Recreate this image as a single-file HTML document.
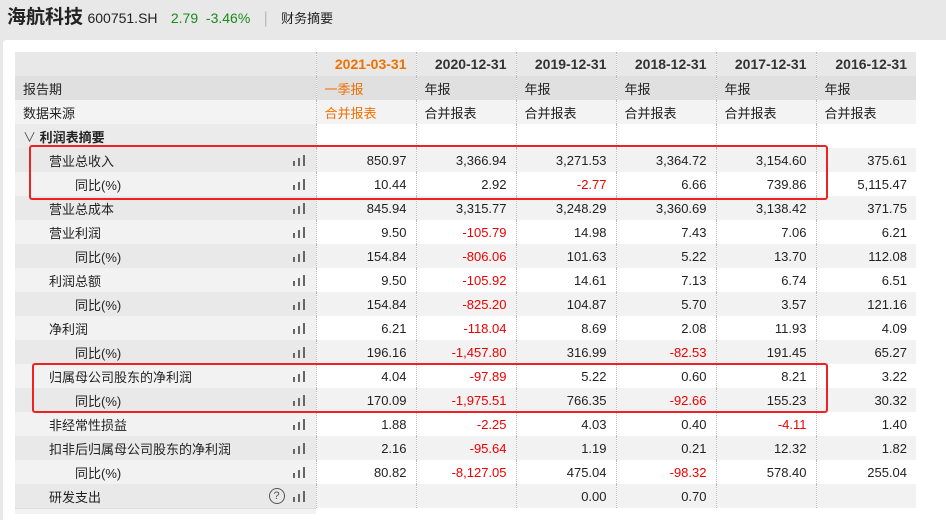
<!DOCTYPE html>
<html><head><meta charset="utf-8"><style>
body{margin:0;width:946px;height:520px;background:#e8e8e8;font-family:"Liberation Sans","Noto Sans CJK SC",sans-serif;position:relative;overflow:hidden;color:#222}
.top{position:absolute;left:7px;top:4px;height:28px;line-height:28px;white-space:nowrap}
.top b{font-size:19px;font-weight:bold;color:#222}
.panel{position:absolute;left:3px;top:40px;width:943px;height:480px;background:#fff;border-radius:3px 0 0 0}
table{position:absolute;left:15px;top:52px;width:901px;border-collapse:collapse;table-layout:fixed;font-size:13px}
td{height:24px;padding:0;white-space:nowrap;overflow:hidden;box-sizing:border-box}
td.l{position:relative}
td.d{padding-right:9px;text-align:right;border-left:1px dotted #bbb}
td.h{padding-left:8px;text-align:left;border-left:1px dotted #bbb}
tr.hd td.d{font-weight:bold;font-size:14px;color:#333}
.o{color:#f07000!important}
.r{color:#e00}
.ic{position:absolute;right:11px;top:7px;width:12px;height:11px}
.ic i{position:absolute;bottom:0;width:2px;background:#666}
.q{position:absolute;right:31px;top:4px;width:14px;height:14px;border:1px solid #555;border-radius:50%;font-size:11px;line-height:14px;text-align:center;color:#555}
.g td.l{background:#e9e9e9}.g td.d{background:#f2f2f2}
.w td.l{background:#f2f2f2}.w td.d{background:#fff}
.box{position:absolute;border:2px solid #ee2222;border-radius:3px}
</style></head><body>
<div class="top"><b>海航科技</b> <span style="font-size:14px">600751.SH</span>&nbsp;&nbsp;&nbsp;<span style="color:#1a8a1a;font-size:14px">2.79&nbsp;&nbsp;-3.46%</span>&nbsp;&nbsp;&nbsp;<span style="color:#bbb">|</span>&nbsp;&nbsp;&nbsp;<span style="font-size:13px">财务摘要</span></div>
<div class="panel"></div>
<table>
<colgroup><col style="width:301px"><col style="width:100px"><col style="width:100px"><col style="width:100px"><col style="width:100px"><col style="width:100px"><col style="width:100px"></colgroup>
<tr class="hd" style="background:#e8e8e8"><td class="l"></td><td class="d o">2021-03-31</td><td class="d">2020-12-31</td><td class="d">2019-12-31</td><td class="d">2018-12-31</td><td class="d">2017-12-31</td><td class="d">2016-12-31</td></tr>
<tr style="background:#e0e0e0"><td class="l" style="padding-left:8px">报告期</td><td class="h o">一季报</td><td class="h">年报</td><td class="h">年报</td><td class="h">年报</td><td class="h">年报</td><td class="h">年报</td></tr>
<tr style="background:#f3f3f3"><td class="l" style="padding-left:8px">数据来源</td><td class="h o">合并报表</td><td class="h">合并报表</td><td class="h">合并报表</td><td class="h">合并报表</td><td class="h">合并报表</td><td class="h">合并报表</td></tr>
<tr><td class="l" style="background:#ebebeb;padding-left:8px;font-weight:bold"><span style="font-weight:normal;color:#555">∨</span> 利润表摘要</td><td class="d"></td><td class="d"></td><td class="d"></td><td class="d"></td><td class="d"></td><td class="d"></td></tr>
<tr class="g"><td class="l" style="padding-left:34px">营业总收入<span class="ic"><i style="left:0;height:5px"></i><i style="left:5px;height:8px"></i><i style="left:10px;height:11px"></i></span></td><td class="d">850.97</td><td class="d">3,366.94</td><td class="d">3,271.53</td><td class="d">3,364.72</td><td class="d">3,154.60</td><td class="d">375.61</td></tr>
<tr class="w"><td class="l" style="padding-left:60px">同比(%)<span class="ic"><i style="left:0;height:5px"></i><i style="left:5px;height:8px"></i><i style="left:10px;height:11px"></i></span></td><td class="d">10.44</td><td class="d">2.92</td><td class="d r">-2.77</td><td class="d">6.66</td><td class="d">739.86</td><td class="d">5,115.47</td></tr>
<tr class="g"><td class="l" style="padding-left:34px">营业总成本<span class="ic"><i style="left:0;height:5px"></i><i style="left:5px;height:8px"></i><i style="left:10px;height:11px"></i></span></td><td class="d">845.94</td><td class="d">3,315.77</td><td class="d">3,248.29</td><td class="d">3,360.69</td><td class="d">3,138.42</td><td class="d">371.75</td></tr>
<tr class="w"><td class="l" style="padding-left:34px">营业利润<span class="ic"><i style="left:0;height:5px"></i><i style="left:5px;height:8px"></i><i style="left:10px;height:11px"></i></span></td><td class="d">9.50</td><td class="d r">-105.79</td><td class="d">14.98</td><td class="d">7.43</td><td class="d">7.06</td><td class="d">6.21</td></tr>
<tr class="g"><td class="l" style="padding-left:60px">同比(%)<span class="ic"><i style="left:0;height:5px"></i><i style="left:5px;height:8px"></i><i style="left:10px;height:11px"></i></span></td><td class="d">154.84</td><td class="d r">-806.06</td><td class="d">101.63</td><td class="d">5.22</td><td class="d">13.70</td><td class="d">112.08</td></tr>
<tr class="w"><td class="l" style="padding-left:34px">利润总额<span class="ic"><i style="left:0;height:5px"></i><i style="left:5px;height:8px"></i><i style="left:10px;height:11px"></i></span></td><td class="d">9.50</td><td class="d r">-105.92</td><td class="d">14.61</td><td class="d">7.13</td><td class="d">6.74</td><td class="d">6.51</td></tr>
<tr class="g"><td class="l" style="padding-left:60px">同比(%)<span class="ic"><i style="left:0;height:5px"></i><i style="left:5px;height:8px"></i><i style="left:10px;height:11px"></i></span></td><td class="d">154.84</td><td class="d r">-825.20</td><td class="d">104.87</td><td class="d">5.70</td><td class="d">3.57</td><td class="d">121.16</td></tr>
<tr class="w"><td class="l" style="padding-left:34px">净利润<span class="ic"><i style="left:0;height:5px"></i><i style="left:5px;height:8px"></i><i style="left:10px;height:11px"></i></span></td><td class="d">6.21</td><td class="d r">-118.04</td><td class="d">8.69</td><td class="d">2.08</td><td class="d">11.93</td><td class="d">4.09</td></tr>
<tr class="g"><td class="l" style="padding-left:60px">同比(%)<span class="ic"><i style="left:0;height:5px"></i><i style="left:5px;height:8px"></i><i style="left:10px;height:11px"></i></span></td><td class="d">196.16</td><td class="d r">-1,457.80</td><td class="d">316.99</td><td class="d r">-82.53</td><td class="d">191.45</td><td class="d">65.27</td></tr>
<tr class="w"><td class="l" style="padding-left:34px">归属母公司股东的净利润<span class="ic"><i style="left:0;height:5px"></i><i style="left:5px;height:8px"></i><i style="left:10px;height:11px"></i></span></td><td class="d">4.04</td><td class="d r">-97.89</td><td class="d">5.22</td><td class="d">0.60</td><td class="d">8.21</td><td class="d">3.22</td></tr>
<tr class="g"><td class="l" style="padding-left:60px">同比(%)<span class="ic"><i style="left:0;height:5px"></i><i style="left:5px;height:8px"></i><i style="left:10px;height:11px"></i></span></td><td class="d">170.09</td><td class="d r">-1,975.51</td><td class="d">766.35</td><td class="d r">-92.66</td><td class="d">155.23</td><td class="d">30.32</td></tr>
<tr class="w"><td class="l" style="padding-left:34px">非经常性损益<span class="ic"><i style="left:0;height:5px"></i><i style="left:5px;height:8px"></i><i style="left:10px;height:11px"></i></span></td><td class="d">1.88</td><td class="d r">-2.25</td><td class="d">4.03</td><td class="d">0.40</td><td class="d r">-4.11</td><td class="d">1.40</td></tr>
<tr class="g"><td class="l" style="padding-left:34px">扣非后归属母公司股东的净利润<span class="ic"><i style="left:0;height:5px"></i><i style="left:5px;height:8px"></i><i style="left:10px;height:11px"></i></span></td><td class="d">2.16</td><td class="d r">-95.64</td><td class="d">1.19</td><td class="d">0.21</td><td class="d">12.32</td><td class="d">1.82</td></tr>
<tr class="w"><td class="l" style="padding-left:60px">同比(%)<span class="ic"><i style="left:0;height:5px"></i><i style="left:5px;height:8px"></i><i style="left:10px;height:11px"></i></span></td><td class="d">80.82</td><td class="d r">-8,127.05</td><td class="d">475.04</td><td class="d r">-98.32</td><td class="d">578.40</td><td class="d">255.04</td></tr>
<tr class="g"><td class="l" style="padding-left:34px">研发支出<span class="q">?</span><span class="ic"><i style="left:0;height:5px"></i><i style="left:5px;height:8px"></i><i style="left:10px;height:11px"></i></span></td><td class="d"></td><td class="d"></td><td class="d">0.00</td><td class="d">0.70</td><td class="d"></td><td class="d"></td></tr>
</table>
<div style="position:absolute;left:15px;top:508px;width:301px;height:5px;background:#f2f2f2;border-top:1px solid #ddd"></div>
<div class="box" style="left:29px;top:145px;width:795px;height:51px"></div>
<div class="box" style="left:32px;top:363px;width:792px;height:46px"></div>
</body></html>
